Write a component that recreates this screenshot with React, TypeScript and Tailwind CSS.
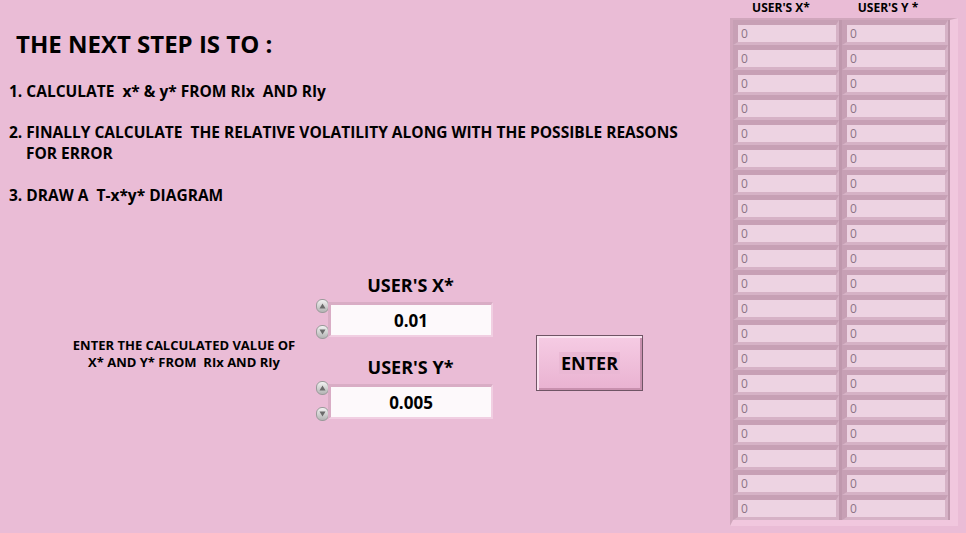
import React from "react";

const font = { fontFamily: '"Open Sans", "Noto Sans", sans-serif' };

function SpinArrow({ up }: { up: boolean }) {
  return (
    <div className="flex h-[14px] w-[13px] items-center justify-center rounded-[6px] border border-[#9a9a9a] bg-gradient-to-b from-[#f2f2f2] to-[#b4b4b4]">
      <svg width="7" height="6" viewBox="0 0 7 6">
        {up ? (
          <path d="M3.5 0.5 L6.5 5.5 L0.5 5.5 Z" fill="#6b6b6b" />
        ) : (
          <path d="M0.5 0.5 L6.5 0.5 L3.5 5.5 Z" fill="#6b6b6b" />
        )}
      </svg>
    </div>
  );
}

function NumericControl({ label, value }: { label: string; value: string }) {
  return (
    <div className="flex flex-col">
      <div className="pl-[12px] text-center text-[18px] font-bold leading-[24px] text-black">
        {label}
      </div>
      <div className="mt-[2px] flex items-center">
        <div className="flex h-[40px] w-[12px] flex-col justify-between">
          <SpinArrow up />
          <SpinArrow up={false} />
        </div>
        <div className="flex h-[35px] w-[165px] items-center justify-center border-l-[3px] border-t-[3px] border-r-[2px] border-b-[2px] border-l-[#d9adc5] border-t-[#d9adc5] border-r-[#f1cfe2] border-b-[#f1cfe2] bg-[#fdf9fb] pt-[2px] text-[17px] font-bold text-black">
          {value}
        </div>
      </div>
    </div>
  );
}

function Cell() {
  return (
    <div className="h-[25px] border-l-[5px] border-t-[5px] border-r-[3px] border-b-[3px] border-l-[#c7a0b5] border-t-[#c7a0b5] border-r-[#d6b2c6] border-b-[#d6b2c6]">
      <div className="h-[17px] bg-[#edd3e2] pl-[3px] text-[12px] leading-[17px] text-[#8c7385]">
        0
      </div>
    </div>
  );
}

export default function App() {
  const rows = Array.from({ length: 20 });
  return (
    <div className="flex h-[533px] w-[966px] overflow-hidden bg-[#eabcd6]" style={font}>
      <div className="w-[729px] shrink-0 text-black">
        <div className="ml-[16px] mt-[29px] text-[24px] font-bold leading-[30px]">
          THE NEXT STEP IS TO :
        </div>
        <div className="ml-[9px] mt-[22px] whitespace-pre text-[15.5px] font-bold leading-[21px]">
          {"1. CALCULATE  x* & y* FROM RIx  AND RIy"}
        </div>
        <div className="ml-[9px] mt-[20px] whitespace-pre text-[15.5px] font-bold leading-[21px]">
          {"2. FINALLY CALCULATE  THE RELATIVE VOLATILITY ALONG WITH THE POSSIBLE REASONS"}
          <div className="pl-[17px]">FOR ERROR</div>
        </div>
        <div className="ml-[9px] mt-[21px] whitespace-pre text-[15.5px] font-bold leading-[21px]">
          {"3. DRAW A  T-x*y* DIAGRAM"}
        </div>

        <div className="mt-[67px] flex items-start">
          <div className="ml-[60px] mt-[64px] w-[248px] whitespace-pre text-center text-[13px] font-bold leading-[17px]">
            {"ENTER THE CALCULATED VALUE OF\nX* AND Y* FROM  RIx AND RIy"}
          </div>
          <div className="ml-[8px] flex flex-col gap-[16px]">
            <NumericControl label="USER'S X*" value="0.01" />
            <NumericControl label="USER'S Y*" value="0.005" />
          </div>
          <button className="ml-[43px] mt-[62px] flex h-[56px] w-[107px] items-center justify-center border border-[#6f5565] bg-gradient-to-b from-[#f6cce4] to-[#e9b2d1] shadow-[inset_2px_2px_0_#fbe2f0,inset_-2px_-2px_0_#c890ae]">
            <span className="bg-[#eab8d4] px-[2px] text-[18px] font-bold leading-[22px] text-black">
              ENTER
            </span>
          </button>
        </div>
      </div>

      <div className="flex flex-col">
        <div className="flex pl-[4px] text-[12px] font-bold leading-[16px] text-black">
          <div className="w-[106px] pr-[10px] text-center">USER'S X*</div>
          <div className="ml-[3px] w-[106px] pr-[14px] text-center">USER'S Y *</div>
        </div>
        <div className="ml-[1px] mt-[2px] flex w-[228px] gap-[3px] border-l-[3px] border-t-[2px] border-r-[8px] border-b-[6px] border-l-[#d0a6bc] border-t-[#d0a6bc] border-r-[#f1c7de] border-b-[#f1c7de] bg-[#bf98ad]">
          <div className="flex w-[106px] flex-col">
            {rows.map((_, i) => (
              <Cell key={`x-${i}`} />
            ))}
          </div>
          <div className="flex w-[106px] flex-col">
            {rows.map((_, i) => (
              <Cell key={`y-${i}`} />
            ))}
          </div>
        </div>
      </div>
    </div>
  );
}
